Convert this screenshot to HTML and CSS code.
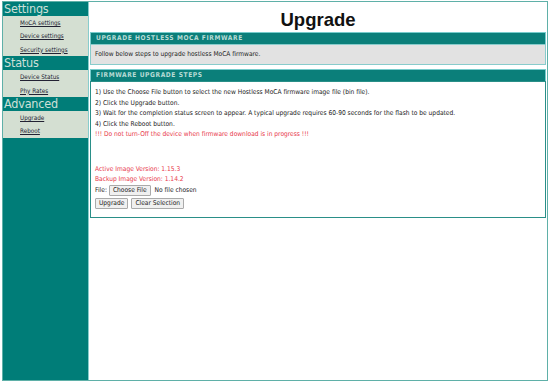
FILE: index.html
```html
<!DOCTYPE html>
<html lang="en">
<head>
  <meta charset="UTF-8" />
  <title>Upgrade</title>
  <link rel="stylesheet" href="styles.css">
</head>
<body>
  <div class="page">
    <div class="menu">
      <div class="menu-head">Settings</div>
      <div class="menu-group">
        <a href="#">MoCA settings</a>
        <a href="#">Device settings</a>
        <a href="#">Security settings</a>
      </div>
      <div class="menu-head">Status</div>
      <div class="menu-group">
        <a href="#">Device Status</a>
        <a href="#">Phy Rates</a>
      </div>
      <div class="menu-head">Advanced</div>
      <div class="menu-group">
        <a href="#">Upgrade</a>
        <a href="#">Reboot</a>
      </div>
    </div>

    <div class="main">
      <h1>Upgrade</h1>

      <div class="box-head">UPGRADE HOSTLESS MOCA FIRMWARE</div>
      <div class="box-body grey">Follow below steps to upgrade hostless MoCA firmware.</div>

      <div class="box-head">FIRMWARE UPGRADE STEPS</div>
      <div class="box-body steps">
        <p>1) Use the Choose File button to select the new Hostless MoCA firmware image file (bin file).</p>
        <p>2) Click the Upgrade button.</p>
        <p>3) Wait for the completion status screen to appear. A typical upgrade requires 60-90 seconds for the flash to be updated.</p>
        <p>4) Click the Reboot button.</p>
        <p class="warn">!!! Do not turn-Off the device when firmware download is in progress !!!</p>

        <p class="warn gap">Active Image Version: 1.15.3</p>
        <p class="warn">Backup Image Version: 1.14.2</p>
        <div class="file-row">File: <button class="btn">Choose File</button> <span>No file chosen</span></div>
        <div class="btn-row">
          <button class="btn">Upgrade</button>
          <button class="btn">Clear Selection</button>
        </div>
      </div>
    </div>
  </div>
</body>
</html>
```

FILE: styles.css
```css
html, body { margin: 0; padding: 0; background: #fff; }
body { font-family: "DejaVu Sans Condensed", "DejaVu Sans", sans-serif; font-size: 6.6px; color: #222; }
.page { display: flex; margin: 1px 2px 0 2px; height: 380px; border: 1px solid #5fb0a8; box-sizing: border-box; }
.menu { width: 85px; background: #007d78; display: flex; flex-direction: column; border-right: 1px solid #8cc; }
.menu-head { height: 14px; line-height: 14px; font-size: 12.5px; color: #cfe0d8; padding-left: 1px; letter-spacing: -0.2px; }
.menu-head + .menu-group { margin-top: 0; }
.menu-group { background: #d4dfd2; display: flex; flex-direction: column; }
.menu-group a { color: #223; text-decoration: underline; height: 13.4px; line-height: 13.4px; padding-left: 17px; font-size: 6.3px; }
.main { flex: 1; display: flex; flex-direction: column; padding: 0 1px 0 1px; }
h1 { margin: 0; text-align: center; font-family: "Liberation Sans", Arial, sans-serif; font-size: 18.5px; font-weight: bold; color: #111; height: 29px; line-height: 36px; }
.box-head { background: #0b7f7a; color: #b9dcd6; font-weight: bold; font-size: 6.6px; letter-spacing: 0.6px; height: 11px; line-height: 11px; padding-left: 5px; margin-top: 1px; border: 1px solid #7cc; border-bottom: none; }
.box-body { border: 1px solid #8cc; padding: 0 4px; }
.box-body.grey { background: #e2e2e2; height: 19px; line-height: 19px; margin-bottom: 3px; }
.steps { padding-top: 5px; height: 130px; border-color: #2a8f88; }
.steps p { margin: 0; line-height: 10.5px; }
.warn { color: #e8384a; }
.gap { margin-top: 24px !important; }
.file-row { line-height: 11px; display: flex; align-items: center; gap: 2px; }
.btn { font-family: inherit; font-size: 6.6px; color: #222; background: #f0f0f0; border: 1px solid #aaa; border-radius: 1px; padding: 1px 3px; height: 11px; line-height: 7px; }
.file-row span { margin-left: 2px; }
.btn-row { margin-top: 2px; display: flex; gap: 3px; }
```
